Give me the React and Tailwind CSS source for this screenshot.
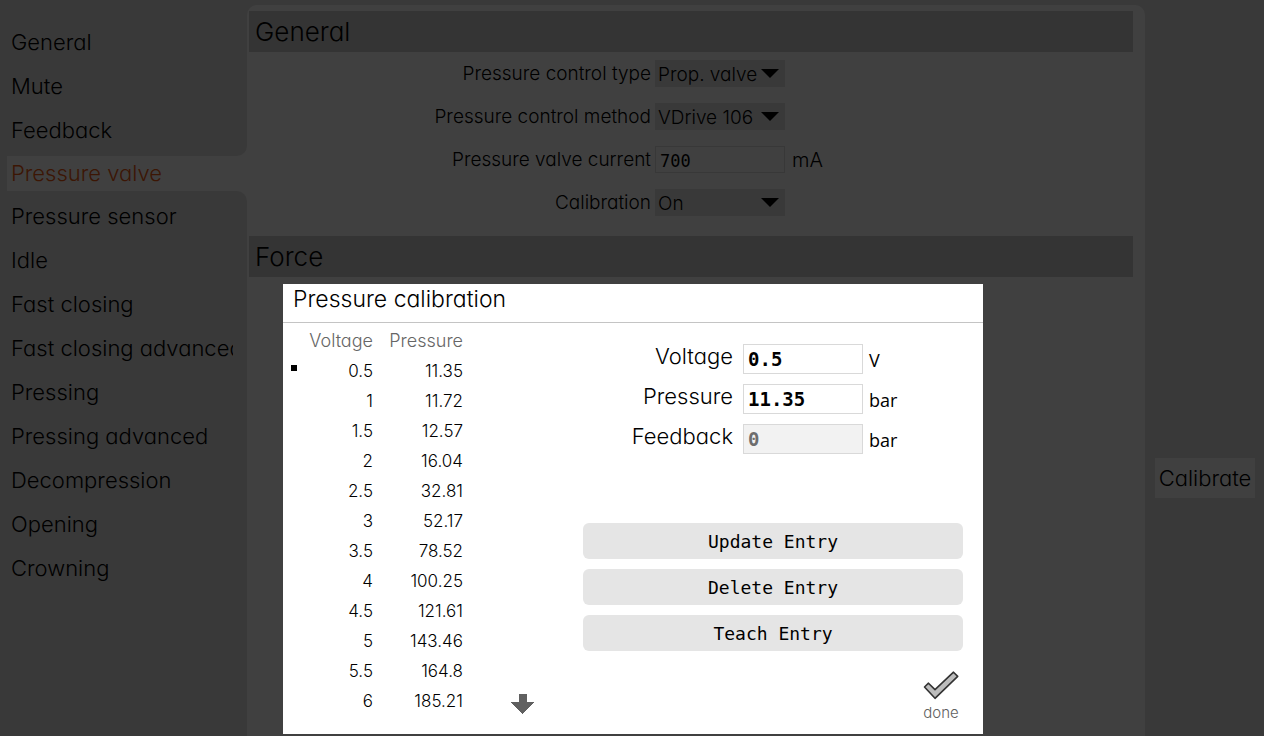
import { useState } from "react";

const SANS = "font-['Inter','Open_Sans',sans-serif] [font-feature-settings:'cv11']";
const MONO = "font-['DejaVu_Sans_Mono','Liberation_Mono',monospace]";

const NAV_BEFORE = ["General", "Mute", "Feedback"];
const NAV_AFTER = [
  "Pressure sensor",
  "Idle",
  "Fast closing",
  "Fast closing advanced",
  "Pressing",
  "Pressing advanced",
  "Decompression",
  "Opening",
  "Crowning",
];

const ENTRIES = [
  ["0.5", "11.35"],
  ["1", "11.72"],
  ["1.5", "12.57"],
  ["2", "16.04"],
  ["2.5", "32.81"],
  ["3", "52.17"],
  ["3.5", "78.52"],
  ["4", "100.25"],
  ["4.5", "121.61"],
  ["5", "143.46"],
  ["5.5", "164.8"],
  ["6", "185.21"],
];

function NavItem({ children }) {
  return (
    <li className="mr-3.5 h-11 overflow-hidden">
      <a href="#" className="block pl-[11px] text-[22px] leading-[43px] whitespace-nowrap text-black">
        {children}
      </a>
    </li>
  );
}

function SectionTitle({ children }) {
  return (
    <h2 className="h-[41px] bg-[#d0d0d0] pl-1.5 text-[26px] leading-[41px]">{children}</h2>
  );
}

function Row({ id, label, unit, children }) {
  return (
    <div className="flex h-[27px] items-center">
      <label htmlFor={id} className="mr-1 w-[402px] shrink-0 text-right text-[19px] leading-[27px] whitespace-nowrap">
        {label}
      </label>
      {children}
      {unit && <span className="ml-[7px] text-xl">{unit}</span>}
    </div>
  );
}

function Select({ id, options }) {
  return (
    <div className="relative w-[130px] shrink-0">
      <select id={id} className="block h-[27px] w-full appearance-none bg-[#e4e4e4] pt-[3px] pl-[3px] text-[19px] leading-6 outline-none">
        {options.map((o) => (
          <option key={o}>{o}</option>
        ))}
      </select>
      <svg className="pointer-events-none absolute top-[9px] right-[6px]" width="18" height="9" viewBox="0 0 18 9" aria-hidden="true">
        <path d="M0 0H18L9 9Z" fill="#000" />
      </svg>
    </div>
  );
}

function Field({ id, label, unit, value, onChange, disabled }) {
  return (
    <div className="flex h-[30px] items-center">
      <label htmlFor={id} className="mr-2.5 w-[150px] pb-1.5 text-right text-[22px] leading-6">
        {label}
      </label>
      <input
        id={id}
        value={value}
        onChange={onChange}
        disabled={disabled}
        className={`${MONO} h-[30px] w-[120px] border border-[#d9d9d9] bg-white pl-1 text-[19px] font-bold text-black outline-none disabled:bg-[#f2f2f2] disabled:text-[#6d6d6d]`}
      />
      <span className="ml-1.5 pt-0.5 font-['Open_Sans',sans-serif] text-lg font-normal">{unit}</span>
    </div>
  );
}

function ActionButton({ children }) {
  return (
    <button type="button" className={`${MONO} h-9 w-full rounded-md bg-[#e5e5e5] pt-0.5 text-lg font-normal text-black`}>
      {children}
    </button>
  );
}

function CalibrationDialog() {
  const [voltage, setVoltage] = useState("0.5");
  const [pressure, setPressure] = useState("11.35");
  return (
    <div role="dialog" aria-labelledby="dialog-title" className="w-[700px] bg-white">
      <h2 id="dialog-title" className="h-[39px] border-b border-[#c4c4c4] pl-2.5 text-[23px] leading-[30px]">
        Pressure calibration
      </h2>
      <div className="flex pr-5">
        <table className="mt-[3px] mb-[18px] text-[17px] leading-6">
          <thead>
            <tr className="h-[30px] text-lg leading-6 text-[#666]">
              <th className="w-5" aria-label="Selected" />
              <th className="w-[70px] p-0 text-right font-light">Voltage</th>
              <th className="w-[90px] p-0 text-right font-light">Pressure</th>
            </tr>
          </thead>
          <tbody>
            {ENTRIES.map(([v, p], i) => (
              <tr key={v} className="h-[30px]">
                <td className="p-0 pl-2 align-top">
                  {i === 0 && <span className="mt-[9px] block size-1.5 bg-black" />}
                </td>
                <td className="p-0 text-right">{v}</td>
                <td className="p-0 text-right">{p}</td>
              </tr>
            ))}
          </tbody>
        </table>
        <button type="button" aria-label="Scroll down" className="mb-5 ml-12 self-end">
          <svg className="block" width="23" height="20" viewBox="0 0 23 20" shapeRendering="crispEdges" aria-hidden="true">
            <path d="M8 0H16V8H23L11.5 20L0 8H8Z" fill="#606060" />
          </svg>
        </button>
        <div className="ml-auto flex w-[380px] flex-col pt-[21px]">
          <div className="flex flex-col gap-2.5">
            <Field id="voltage" label="Voltage" unit="V" value={voltage} onChange={(e) => setVoltage(e.target.value)} />
            <Field id="pressure" label="Pressure" unit="bar" value={pressure} onChange={(e) => setPressure(e.target.value)} />
            <Field id="feedback" label="Feedback" unit="bar" value="0" disabled />
          </div>
          <div className="mt-[69px] flex flex-col gap-2.5">
            <ActionButton>Update Entry</ActionButton>
            <ActionButton>Delete Entry</ActionButton>
            <ActionButton>Teach Entry</ActionButton>
          </div>
          <button type="button" className="mt-5 flex w-11 flex-col items-center self-end text-[15px] leading-5 text-[#606060]">
            <svg width="36" height="29" viewBox="0 0 36 29" aria-hidden="true">
              <path d="M1.5 16L5.5 12.2L12 18.6L30.5 1.2L34.7 5.4L12 27.3Z" fill="#bdbdbd" stroke="#333" strokeWidth="1.6" strokeLinejoin="round" />
            </svg>
            <span className="mt-[3px]">done</span>
          </button>
        </div>
      </div>
    </div>
  );
}

export default function App() {
  return (
    <div className={`${SANS} flex min-h-screen bg-[#e4e4e4] font-light text-black`}>
      <nav className="flex w-[247px] shrink-0 flex-col bg-white">
        <ul className="rounded-br-[10px] bg-[#e4e4e4] pt-[21px] pb-[3px]">
          {NAV_BEFORE.map((n) => (
            <NavItem key={n}>{n}</NavItem>
          ))}
        </ul>
        <div className="border-l-[7px] border-[#e4e4e4] bg-white">
          <a href="#" aria-current="page" className="block pl-1 text-[22px] leading-[35px] text-[#ee5a12]">
            Pressure valve
          </a>
        </div>
        <ul className="flex-1 rounded-tr-[10px] bg-[#e4e4e4] pt-1">
          {NAV_AFTER.map((n) => (
            <NavItem key={n}>{n}</NavItem>
          ))}
        </ul>
      </nav>

      <main className="mt-[5px] min-w-0 flex-1 rounded-t-[10px] bg-white pt-1.5 pr-3 pl-0.5">
        <SectionTitle>General</SectionTitle>
        <form className="flex flex-col gap-4 pt-2 pb-5">
          <Row id="type" label="Pressure control type">
            <Select id="type" options={["Prop. valve"]} />
          </Row>
          <Row id="method" label="Pressure control method">
            <Select id="method" options={["VDrive 106"]} />
          </Row>
          <Row id="current" label="Pressure valve current" unit="mA">
            <input id="current" defaultValue="700" className={`${MONO} h-[27px] w-[130px] border border-[#e0e0e0] bg-white pt-0.5 pl-1 text-[17px] font-normal outline-none`} />
          </Row>
          <Row id="calibration" label="Calibration">
            <Select id="calibration" options={["On", "Off"]} />
          </Row>
        </form>
        <SectionTitle>Force</SectionTitle>
      </main>

      <aside className="w-[119px] shrink-0 pt-[458px] pr-[9px] pl-2.5">
        <button type="button" className="h-10 w-full bg-white text-[22px]">
          Calibrate
        </button>
      </aside>

      <div className="fixed inset-0 flex items-end justify-center bg-black/75 pb-0.5 pl-0.5">
        <CalibrationDialog />
      </div>
    </div>
  );
}
